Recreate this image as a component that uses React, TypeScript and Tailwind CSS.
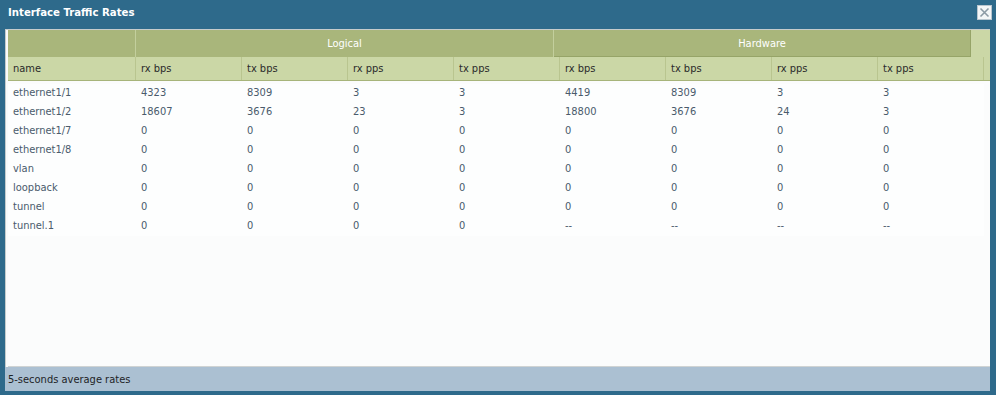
import React from 'react';

interface Row {
  name: string;
  values: string[];
}

const rows: Row[] = [
  { name: 'ethernet1/1', values: ['4323', '8309', '3', '3', '4419', '8309', '3', '3'] },
  { name: 'ethernet1/2', values: ['18607', '3676', '23', '3', '18800', '3676', '24', '3'] },
  { name: 'ethernet1/7', values: ['0', '0', '0', '0', '0', '0', '0', '0'] },
  { name: 'ethernet1/8', values: ['0', '0', '0', '0', '0', '0', '0', '0'] },
  { name: 'vlan', values: ['0', '0', '0', '0', '0', '0', '0', '0'] },
  { name: 'loopback', values: ['0', '0', '0', '0', '0', '0', '0', '0'] },
  { name: 'tunnel', values: ['0', '0', '0', '0', '0', '0', '0', '0'] },
  { name: 'tunnel.1', values: ['0', '0', '0', '0', '--', '--', '--', '--'] },
];

const columns = ['rx bps', 'tx bps', 'rx pps', 'tx pps', 'rx bps', 'tx bps', 'rx pps', 'tx pps'];

const App: React.FC = () => {
  return (
    <div
      className="w-[996px] h-[395px] bg-[#2e6a8b] flex flex-col overflow-hidden text-[11px]"
      style={{ fontFamily: '"DejaVu Sans Condensed", "DejaVu Sans", sans-serif' }}
    >
      {/* Title bar */}
      <div className="h-[29px] flex items-start justify-between pl-[8px] pr-[4px]">
        <span className="mt-[5px] text-white font-bold text-[11.3px] leading-[16px]">
          Interface Traffic Rates
        </span>
        <button className="mt-[5px] w-[15px] h-[15px] bg-[#f4f6f7] border border-[#b9c6cf] flex items-center justify-center">
          <svg width="11" height="11" viewBox="0 0 11 11">
            <path d="M1.5 1.5 L9.5 9.5 M9.5 1.5 L1.5 9.5" stroke="#8c9aa4" strokeWidth="1.6" />
          </svg>
        </button>
      </div>

      {/* Panel */}
      <div className="flex-1 ml-[5px] mr-[6px] flex flex-col bg-[#f9fbfb] border-l border-t border-[#c5cccc]">
        <div className="flex flex-col pl-[2px] flex-1 min-h-0">
          {/* Group header */}
          <div className="flex h-[27px] bg-[#cbd7a6]">
            <div className="w-[128px] bg-[#a9b67b] border-r border-[#c3cf9d]" />
            <div className="w-[418px] bg-[#a9b67b] border-r border-[#c3cf9d] text-white flex items-center justify-center pt-[2px]">
              Logical
            </div>
            <div className="w-[417px] bg-[#a9b67b] border-r border-[#96a468] border-b text-white flex items-center justify-center pt-[2px]">
              Hardware
            </div>
            <div className="flex-1" />
          </div>

          {/* Column header */}
          <div className="flex h-[24px] bg-[#cbd7a6] border-b border-[#a7b47a] text-[#2a2a2a]">
            <div className="w-[128px] pl-[5px] pt-[2px] flex items-center border-r border-[#b9c58f]">name</div>
            {columns.map((c, i) => (
              <div
                key={i}
                className="w-[106px] pl-[5px] pt-[2px] flex items-center border-r border-[#b9c58f]"
              >
                {c}
              </div>
            ))}
            <div className="flex-1" />
          </div>

          {/* Body */}
          <div className="flex-1 pt-[3px] bg-[#fbfcfc] border-b border-[#cfd3d3]">
            {rows.map((r) => (
              <div key={r.name} className="flex h-[19px] text-[#4a5b6c] w-[976px] bg-[#fdfefe]">
                <div className="w-[128px] pl-[5px] flex items-center">{r.name}</div>
                {r.values.map((v, i) => (
                  <div key={i} className="w-[106px] pl-[5px] flex items-center">
                    {v}
                  </div>
                ))}
              </div>
            ))}
          </div>
        </div>

        {/* Footer */}
        <div className="h-[24px] bg-[#abc0d2] pl-[3px] pt-[3px] flex items-center text-[#1e2326] -ml-px">
          5-seconds average rates
        </div>
      </div>
      <div className="h-[4px]" />
    </div>
  );
};

export default App;
